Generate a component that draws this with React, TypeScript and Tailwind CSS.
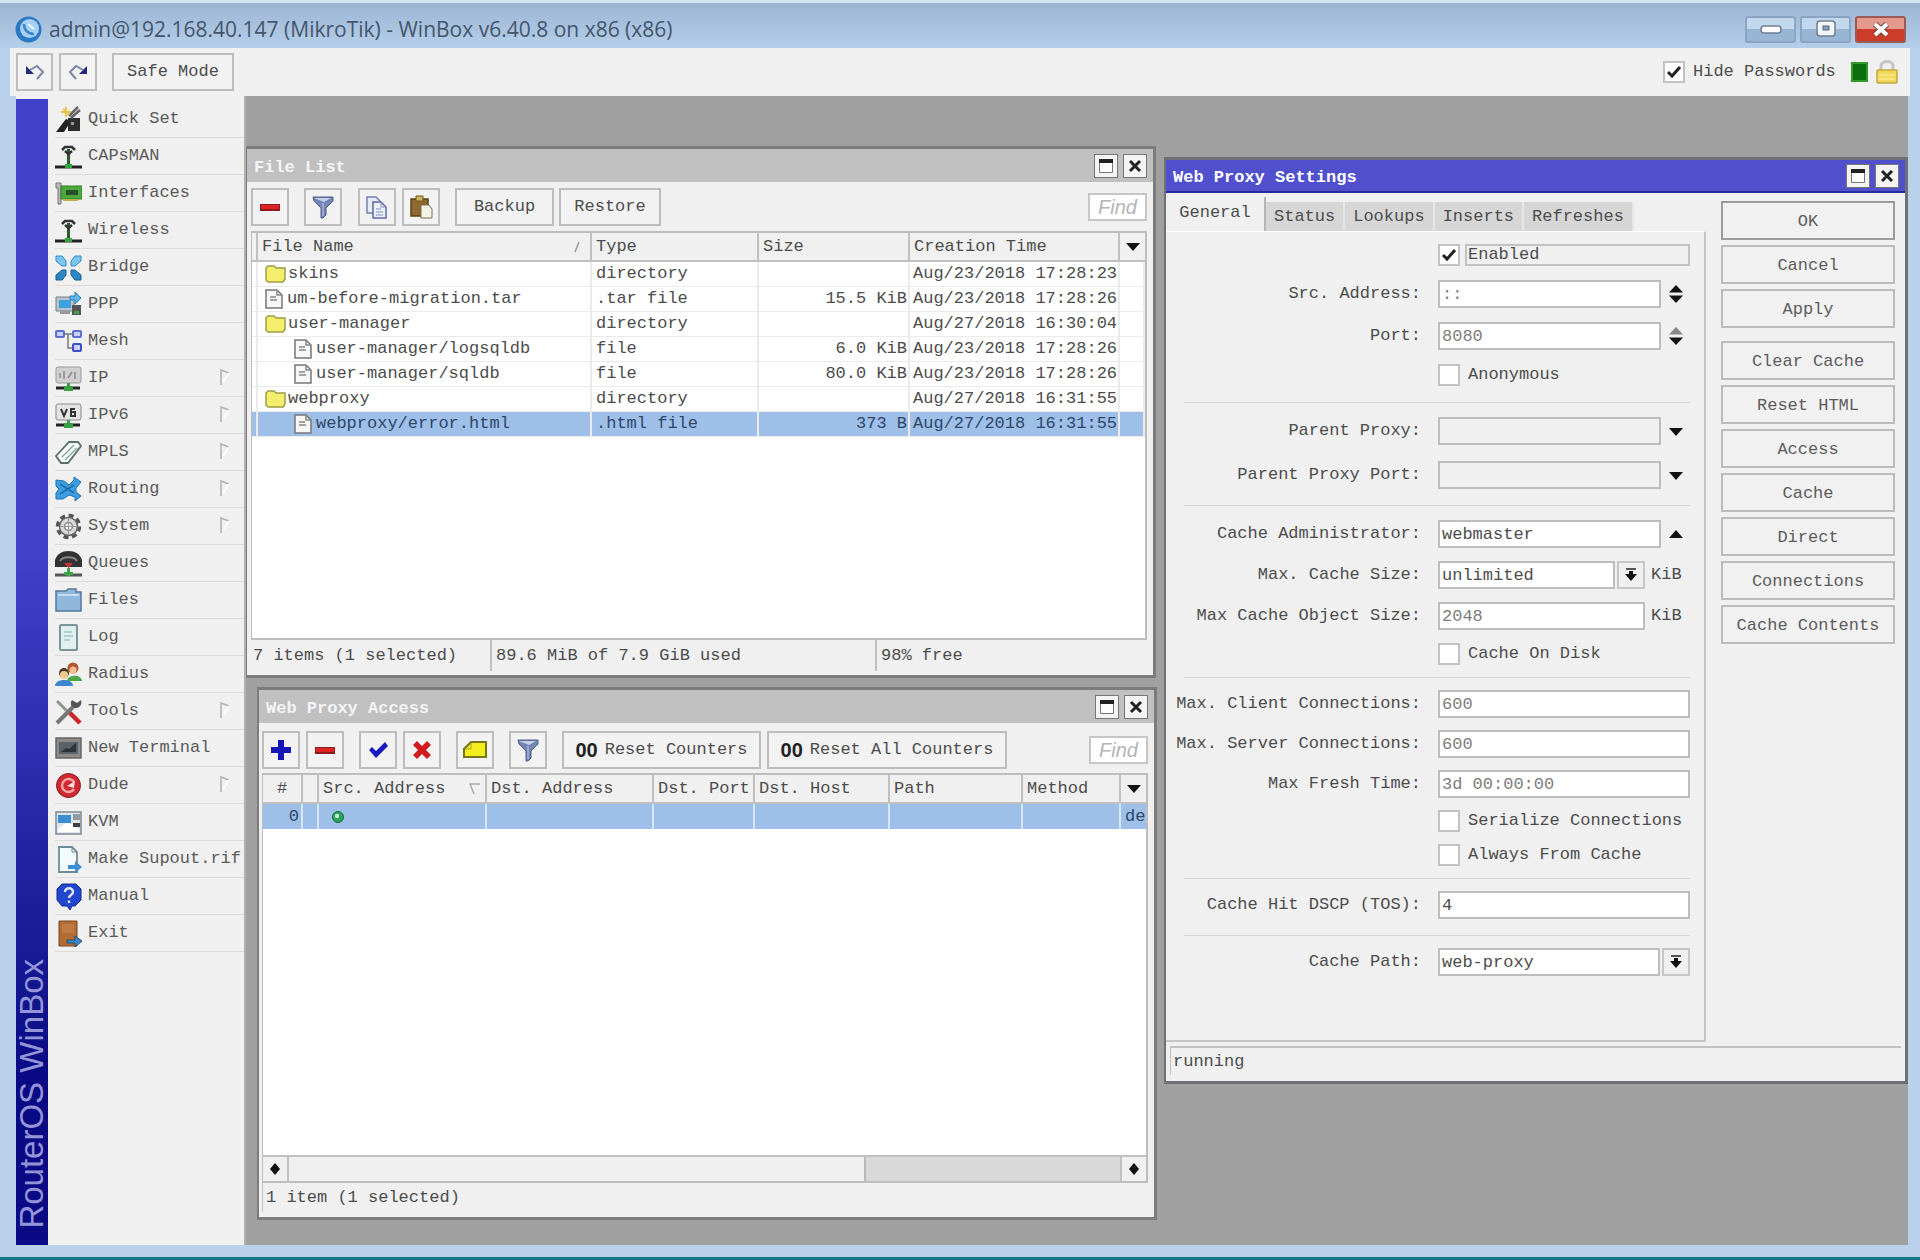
import React, { useId } from "react";

const TEXT = "text-[17px] leading-5 text-[#4c4c4c]";

/* ---------- sidebar icons, all on a 27x27 grid ---------- */

const Antenna = () => (
    <>
        <path d="M0 24h27" stroke="#222" strokeWidth="3" />
        <path d="M13.500 6v17" stroke="#2c5a2c" strokeWidth="3" />
        <path d="M7 7l3-3h7l3 3M10 8l3.500 3 3.500-3" stroke="#333" strokeWidth="2.500" fill="none" />
        <path d="M10 21h7v4h-7z" fill="#35a33f" />
    </>
);

const icons: Record<string, React.ReactNode> = {
    quickset: (
        <>
            <path d="M1 26l10-13 5 2-7 11z" fill="#222" />
            <path d="M13 12h12v13H13z" fill="#2c2c2c" />
            <path d="M14 10l9-9M16 12l9-8" stroke="#666" strokeWidth="2.500" />
            <path d="M11 1v10M6 6h10M8 3l6 6" stroke="#e2c54a" strokeWidth="1.800" />
            <path d="M16 16h3v3h-3z" fill="#999" />
        </>
    ),
    antenna: <Antenna />,
    interfaces: (
        <>
            <path d="M1 3h5v21H3V8H1z" fill="#b8b8b8" stroke="#777" />
            <path d="M6 6h21v13H6z" fill="#4ea83a" stroke="#2f7a26" />
            <path d="M11 10h12v5H11z" fill="#28502a" />
            <path d="M8 19h15v2H8z" fill="#b9b04a" />
        </>
    ),
    bridge: (
        <>
            <path d="M1 2h6l4 5v5H7L1 7z" fill="#7cc4ee" stroke="#2f8fc9" />
            <path d="M26 2h-6l-4 5v5h4l6-5z" fill="#7cc4ee" stroke="#2f8fc9" />
            <path d="M1 26h6l4-5v-5H7l-6 5z" fill="#2e86c4" stroke="#155f97" />
            <path d="M26 26h-6l-4-5v-5h4l6 5z" fill="#2e86c4" stroke="#155f97" />
        </>
    ),
    ppp: (
        <>
            <path d="M1 6h18v14H1z" fill="#b9c3ca" stroke="#75828b" />
            <path d="M4 9h12v8H4z" fill="#3fa0e0" />
            <path d="M15 5h5V1l6 6-6 6V9h-5z" fill="#5db5ea" stroke="#2a80ba" />
            <path d="M5 20h10v3H5z" fill="#999" />
            <path d="M17 14h9v10h-9z" fill="#555" />
            <path d="M19 20h5v3h-5z" fill="#3fa14a" />
        </>
    ),
    mesh: (
        <>
            <path d="M9 6h9M13 6v14h6" stroke="#777" strokeWidth="1.500" fill="none" />
            <rect x="1" y="3" width="8" height="6" rx="1" fill="#c8d0fa" stroke="#5c6fd0" strokeWidth="2" />
            <rect x="18" y="3" width="8" height="6" rx="1" fill="#c8d0fa" stroke="#5c6fd0" strokeWidth="2" />
            <rect x="18" y="16" width="8" height="7" rx="1" fill="#c8d0fa" stroke="#3e4fc0" strokeWidth="2" />
        </>
    ),
    ip: (
        <>
            <rect x="1" y="2" width="25" height="16" rx="2" fill="#d0d0d0" stroke="#999" />
            <path d="M5 13V8m4 6V6m4 7l4-6m3 0v7" stroke="#888" strokeWidth="1.500" />
            <path d="M1 23h24" stroke="#222" strokeWidth="3" />
            <path d="M12 18h3v3h3v5H9v-5h3z" fill="#38a043" />
        </>
    ),
    ipv6: (
        <>
            <rect x="1" y="2" width="25" height="16" rx="2" fill="#e4e4e4" stroke="#888" />
            <path d="M6 7l3 7 3-7M20 7h-4v7h4v-4h-4" stroke="#333" strokeWidth="2" fill="none" />
            <path d="M1 23h24" stroke="#222" strokeWidth="3" />
            <path d="M12 18h3v3h3v5H9v-5h3z" fill="#38a043" />
        </>
    ),
    mpls: (
        <>
            <path d="M1 17L14 3h9l3 4-13 17H6z" fill="#f6fbf8" stroke="#57706a" strokeWidth="1.800" />
            <path d="M7 18L19 6M10 21L22 9" stroke="#7da395" strokeWidth="1.200" />
        </>
    ),
    routing: (
        <>
            <path d="M1 4l8 1 5 4 5-5V1l7 5-5 6v4l5 4-6 5v-4l-6-2-6 4H1v-6l3-4-3-3z" fill="#3d9de0" stroke="#1f73b0" />
            <path d="M5 8l14 9M5 18l14-9" stroke="#1d6cab" strokeWidth="1.500" />
        </>
    ),
    system: (
        <>
            <circle cx="13.500" cy="13.500" r="11" fill="none" stroke="#555" strokeWidth="3.500" strokeDasharray="5 3.600" />
            <circle cx="13.500" cy="13.500" r="9" fill="#d9d9d9" stroke="#666" strokeWidth="1.500" />
            <circle cx="13.500" cy="13.500" r="4" fill="#f4f4f4" stroke="#888" strokeWidth="1.500" />
            <path d="M13.500 5v17M5 13.500h17" stroke="#999" />
        </>
    ),
    queues: (
        <>
            <path d="M0 17V10C2 4 7 1 13.500 1S25 4 27 10v7z" fill="#333" />
            <path d="M5 11c3-5 14-5 17 0" stroke="#888" strokeWidth="2" fill="none" />
            <path d="M9 13h9l-4.500 5z" fill="#c33" />
            <path d="M0 25h27" stroke="#555" strokeWidth="3" />
            <path d="M12 18h3v8h-3z" fill="#3da548" />
            <path d="M9 22h9v3H9z" fill="#3da548" />
        </>
    ),
    files: (
        <>
            <path d="M1 4h10l2-2h8v3h5v19H1z" fill="#8fb8da" stroke="#54789a" strokeWidth="1.500" />
            <path d="M3 8h21" stroke="#c3dcf0" strokeWidth="2" />
        </>
    ),
    log: (
        <>
            <rect x="5" y="1" width="17" height="25" rx="1" fill="#dff0ee" stroke="#7a9598" strokeWidth="2" />
            <path d="M9 8h8M9 12h9M9 16h6" stroke="#a5c6c8" strokeWidth="1.500" />
        </>
    ),
    radius: (
        <>
            <circle cx="18" cy="7" r="5.500" fill="#b4562d" />
            <circle cx="18" cy="9" r="3.500" fill="#efc08d" />
            <path d="M12 20c0-6 14-8 15 0z" fill="#4ea64a" />
            <circle cx="9" cy="12" r="5" fill="#4b3a25" />
            <circle cx="9" cy="14" r="4" fill="#efc98f" />
            <path d="M0 25c0-8 18-8 18 0z" fill="#3f86d2" />
        </>
    ),
    tools: (
        <>
            <path d="M2 3l11 11" stroke="#8a9a86" strokeWidth="3" />
            <path d="M13 13l12 12" stroke="#c9252b" strokeWidth="4.500" />
            <path d="M2 25L18 9" stroke="#777" strokeWidth="4" />
            <path d="M17 2c-3 4 0 9 5 8 4-1 5-5 4-8l-4 3z" fill="#555" />
        </>
    ),
    terminal: (
        <>
            <path d="M1 3h25v20H1z" fill="#8a8a8a" stroke="#666" strokeWidth="1.500" />
            <path d="M4 7h19v12H4z" fill="#5a6268" />
            <path d="M6 17l5-4 3 1 7-6v9z" fill="#2c3339" />
        </>
    ),
    dude: (
        <>
            <circle cx="13.500" cy="13.500" r="12" fill="#cf2a31" stroke="#8d1a1f" />
            <path d="M19 10a6.500 6.500 0 1 0 0 7" fill="none" stroke="#f2a6a8" strokeWidth="2.500" />
            <path d="M12 14l8-5-1 7z" fill="#f8dcdc" />
        </>
    ),
    kvm: (
        <>
            <path d="M1 3h25v22H1z" fill="#dfe5ea" stroke="#7c8894" strokeWidth="1.500" />
            <path d="M3 6h13v8H3z" fill="#3c8ed2" />
            <path d="M18 5h7v6h-7z" fill="#909aa2" />
            <path d="M3 20l8-6 10 2 4 7H3z" fill="#fff" />
            <path d="M18 14h7v4h-7z" fill="#3a4148" />
        </>
    ),
    supout: (
        <>
            <path d="M4 1h13l5 5v20H4z" fill="#f3fbfd" stroke="#6c8c98" strokeWidth="1.800" />
            <path d="M17 1v5h5" fill="none" stroke="#6c8c98" />
            <path d="M13 19h7v-4l7 6-7 6v-4h-7z" fill="#3c8fd6" />
        </>
    ),
    manual: (
        <>
            <path d="M7 1h14l5 5v11l-6 6h-3l-2 4-3-4H7l-5-6V6z" fill="#2147cf" stroke="#12298f" />
            <path d="M10 9c0-5 8-5 8 0 0 3-4 3-4 6M14 17.500v2.500" stroke="#dfe8ff" strokeWidth="2.500" fill="none" />
        </>
    ),
    exit: (
        <>
            <path d="M4 1h18v25H4z" fill="#b26a33" stroke="#7b4520" />
            <path d="M7 4h12v9H7z" fill="#be7a42" />
            <path d="M12 20h8v-4l7 5-7 6v-4h-8z" fill="#3c87c9" stroke="#24516f" />
        </>
    ),
};

const menu = [
    { label: "Quick Set", icon: "quickset" },
    { label: "CAPsMAN", icon: "antenna" },
    { label: "Interfaces", icon: "interfaces" },
    { label: "Wireless", icon: "antenna" },
    { label: "Bridge", icon: "bridge" },
    { label: "PPP", icon: "ppp" },
    { label: "Mesh", icon: "mesh" },
    { label: "IP", icon: "ip", sub: true },
    { label: "IPv6", icon: "ipv6", sub: true },
    { label: "MPLS", icon: "mpls", sub: true },
    { label: "Routing", icon: "routing", sub: true },
    { label: "System", icon: "system", sub: true },
    { label: "Queues", icon: "queues" },
    { label: "Files", icon: "files" },
    { label: "Log", icon: "log" },
    { label: "Radius", icon: "radius" },
    { label: "Tools", icon: "tools", sub: true },
    { label: "New Terminal", icon: "terminal" },
    { label: "Dude", icon: "dude", sub: true },
    { label: "KVM", icon: "kvm" },
    { label: "Make Supout.rif", icon: "supout" },
    { label: "Manual", icon: "manual" },
    { label: "Exit", icon: "exit" },
];

const files = [
    { name: "skins", type: "directory", size: "", time: "Aug/23/2018 17:28:23", dir: true },
    { name: "um-before-migration.tar", type: ".tar file", size: "15.5 KiB", time: "Aug/23/2018 17:28:26" },
    { name: "user-manager", type: "directory", size: "", time: "Aug/27/2018 16:30:04", dir: true },
    { name: "user-manager/logsqldb", type: "file", size: "6.0 KiB", time: "Aug/23/2018 17:28:26", child: true },
    { name: "user-manager/sqldb", type: "file", size: "80.0 KiB", time: "Aug/23/2018 17:28:26", child: true },
    { name: "webproxy", type: "directory", size: "", time: "Aug/27/2018 16:31:55", dir: true },
    { name: "webproxy/error.html", type: ".html file", size: "373 B", time: "Aug/27/2018 16:31:55", child: true, selected: true },
];

/* ---------- small toolbar drawings ---------- */

const Minus = () => (
    <svg width="22" height="22" viewBox="0 0 22 22">
        <path d="M1 8h20v7H1z" fill="#8f1c1c" />
        <path d="M2 9h18v4H2z" fill="#dc2222" />
    </svg>
);

const Plus = () => (
    <svg width="22" height="22" viewBox="0 0 22 22">
        <path d="M8 1h6v7h7v6h-7v7H8v-7H1V8h7z" fill="#1515b8" />
    </svg>
);

const Tick = () => (
    <svg width="22" height="22" viewBox="0 0 22 22">
        <path d="M2 11l3-3 4 4 9-9 3 4L9 19z" fill="#1a1abf" />
    </svg>
);

const Cross = () => (
    <svg width="22" height="22" viewBox="0 0 22 22">
        <path d="M2 6l4-4 5 5 5-5 4 4-5 5 5 5-4 4-5-5-5 5-4-4 5-5z" fill="#d01c1c" />
    </svg>
);

const Note = () => (
    <svg width="26" height="22" viewBox="0 0 26 22">
        <path d="M2 18V10l7-7h15v15z" fill="#f2ee1c" stroke="#77741c" strokeWidth="2" />
        <path d="M3 10h6V4" fill="none" stroke="#a8a43a" />
    </svg>
);

const Funnel = () => (
    <svg width="24" height="24" viewBox="0 0 24 24">
        <path d="M2 2h20v4l-7 7v7l-3 3h-2V13L3 6z" fill="#7385b4" stroke="#4e5c88" />
        <path d="M3 3h17l-7 4z" fill="#c7cfe4" />
        <path d="M12 8v13" stroke="#aab5d3" strokeWidth="1.500" />
    </svg>
);

const Copy = () => (
    <svg width="26" height="26" viewBox="0 0 26 26">
        <path d="M3 3h9l4 4v12H3z" fill="#e8ebf7" stroke="#7683b0" strokeWidth="1.500" />
        <path d="M9 8h8l5 5v11H9z" fill="#eef0fb" stroke="#5b69a5" strokeWidth="1.500" />
        <path d="M17 8v5h5M12 15h5M12 18h7M12 21h7" fill="none" stroke="#8290c4" />
    </svg>
);

const Paste = () => (
    <svg width="26" height="26" viewBox="0 0 26 26">
        <path d="M3 5h17v17H3z" fill="#8c6a30" stroke="#5b4219" strokeWidth="1.500" />
        <path d="M8 2h7v5H8z" fill="#cbb35f" stroke="#6e5620" />
        <path d="M13 11h8l3 4v9H13z" fill="#f5f2e6" stroke="#7a7050" />
    </svg>
);

const Down = () => (
    <svg width="16" height="9" viewBox="0 0 16 9">
        <path d="M1 1h14L8 9z" fill="#111" />
    </svg>
);

const Spinner = ({ dim }: { dim?: boolean }) => (
    <svg width="16" height="20" viewBox="0 0 16 20">
        <path d="M1 8.500L8 1l7 7.500z" fill={dim ? "#888" : "#111"} />
        <path d="M1 11.500h14L8 19z" fill="#111" />
    </svg>
);

const Diamond = () => (
    <svg width="12" height="12" viewBox="0 0 12 12">
        <path d="M6 0l5 6-5 6-5-6z" fill="#111" />
    </svg>
);

const DropIcon = () => (
    <svg width="14" height="16" viewBox="0 0 14 16">
        <path d="M2 1h10v2H2z" fill="#555" />
        <path d="M5 4h4v3h4l-6 7-6-7h4z" fill="#111" />
    </svg>
);

const Folder = () => (
    <svg width="22" height="18" viewBox="0 0 22 18">
        <path d="M1 3l2-2h6l2 2h9v11l-2 3H3l-2-2z" fill="#f3ef6c" stroke="#a09b45" strokeWidth="1.500" />
    </svg>
);

const Doc = () => (
    <svg width="18" height="20" viewBox="0 0 18 20">
        <path d="M1 1h11l5 5v13H1z" fill="#f7f7f7" stroke="#777" strokeWidth="1.500" />
        <path d="M12 1v5h5M5 8h6M5 11h7" fill="none" stroke="#888" strokeWidth="1.500" />
    </svg>
);

/* ---------- shared controls ---------- */

function ToolButton({ label, className = "", children }: { label?: string; className?: string; children: React.ReactNode }) {
    return (
        <button
            aria-label={label}
            className={`flex h-[38px] items-center justify-center border-2 border-[#bdbdbd] bg-[#f2f2f2] ${className}`}
        >
            {children}
        </button>
    );
}

function Checkbox({ label, checked, boxed }: { label: string; checked?: boolean; boxed?: boolean }) {
    return (
        <label className="flex h-[22px] w-full items-center gap-[5px]">
            <span className="relative h-[22px] w-[22px] shrink-0">
                <input
                    type="checkbox"
                    defaultChecked={checked}
                    className="peer block h-[22px] w-[22px] appearance-none border-2 border-[#c2c2c2] bg-white"
                />
                <svg
                    className="pointer-events-none absolute left-1 top-1 hidden peer-checked:block"
                    width="14"
                    height="14"
                    viewBox="0 0 14 14"
                >
                    <path d="M1 7l4 4 8-9" fill="none" stroke="#222" strokeWidth="3" />
                </svg>
            </span>
            <span className={`flex h-[22px] flex-1 items-center whitespace-nowrap border-2 px-px ${boxed ? "border-[#c2c2c2]" : "border-transparent"}`}>
                {label}
            </span>
        </label>
    );
}

function TitleBar({ title, active }: { title: string; active?: boolean }) {
    return (
        <div
            className={`flex h-[33px] shrink-0 items-center justify-between pl-[7px] pr-[6px] font-bold ${
                active ? "border-b-2 border-[#2a2aa0] bg-[#5050cc] text-white" : "bg-[#c0c0c0] text-[#f4f4f4]"
            }`}
        >
            <h2 className="pt-1">{title}</h2>
            <div className="flex gap-[5px]">
                <button aria-label="Maximize" className="flex h-6 w-6 items-center justify-center border border-[#777] bg-[#f4f4f4]">
                    <svg width="16" height="16" viewBox="0 0 16 16">
                        <path d="M1.500 1.500h13v13h-13z" fill="#fff" stroke="#777" />
                        <path d="M1 1h14v4H1z" fill="#222" />
                    </svg>
                </button>
                <button aria-label="Close" className="flex h-6 w-6 items-center justify-center border border-[#777] bg-[#f4f4f4]">
                    <svg width="14" height="14" viewBox="0 0 14 14">
                        <path d="M2 2l10 10M12 2L2 12" stroke="#222" strokeWidth="3" />
                    </svg>
                </button>
            </div>
        </div>
    );
}

function Find() {
    return (
        <input
            aria-label="Find"
            placeholder="Find"
            className="ml-auto h-7 w-[59px] border-2 border-[#c6c6c6] bg-white text-center font-['Liberation_Sans',sans-serif] text-[20px] italic placeholder:text-[#b4b4b4]"
        />
    );
}

const TH = "h-[29px] border-r-2 border-b-2 border-[#c0c0c0] bg-[#f0f0f0] font-normal whitespace-nowrap overflow-hidden";
const TH_LEFT = `${TH} px-1 text-left`;

function FileList() {
    return (
        <section className="absolute left-0 top-[50px] flex h-[532px] w-[910px] flex-col border-[3px] border-l border-[#7c7c7c] bg-[#f0f0f0]">
            <TitleBar title="File List" />
            <div className="flex items-center pb-[5px] pl-1 pr-[6px] pt-[6px]">
                <ToolButton label="Remove" className="mr-[15px] w-[38px]"><Minus /></ToolButton>
                <ToolButton label="Filter" className="mr-4 w-[38px]"><Funnel /></ToolButton>
                <ToolButton label="Copy" className="mr-[6px] w-[38px]"><Copy /></ToolButton>
                <ToolButton label="Paste" className="mr-[15px] w-[38px]"><Paste /></ToolButton>
                <ToolButton className="mr-[5px] w-[99px]">Backup</ToolButton>
                <ToolButton className="w-[102px]">Restore</ToolButton>
                <Find />
            </div>
            <div className="ml-1 mr-[6px] flex-1 border-2 border-l border-[#bdbdbd] bg-white">
                <table className="w-full table-fixed border-separate border-spacing-0">
                    <colgroup>
                        <col className="w-[6px]" />
                        <col />
                        <col className="w-[167px]" />
                        <col className="w-[151px]" />
                        <col className="w-[210px]" />
                        <col className="w-[25px]" />
                    </colgroup>
                    <thead>
                        <tr>
                            <th className={TH}></th>
                            <th className={TH_LEFT}>
                                <div className="flex items-center justify-between pr-[6px]">
                                    File Name
                                    <svg width="6" height="12" viewBox="0 0 6 12">
                                        <path d="M1 11L5 1" stroke="#999" strokeWidth="1.500" />
                                    </svg>
                                </div>
                            </th>
                            <th className={TH_LEFT}>Type</th>
                            <th className={TH_LEFT}>Size</th>
                            <th className={TH_LEFT}>Creation Time</th>
                            <th className="h-[29px] border-b-2 border-[#c0c0c0] bg-[#f0f0f0]">
                                <button aria-label="Columns" className="flex w-full justify-center"><Down /></button>
                            </th>
                        </tr>
                    </thead>
                    <tbody>
                        {files.map((f) => {
                            const td = `h-[25px] border-r-2 border-b border-[#ebebeb] overflow-hidden whitespace-nowrap ${f.selected ? "bg-[#9dbfe8] text-[#2f4668]" : ""}`;
                            return (
                                <tr key={f.name}>
                                    <td className={td}></td>
                                    <td className={td}>
                                        <span className={`flex items-center ${f.dir ? "gap-px" : "gap-1"} ${f.child ? "pl-9" : "pl-[7px]"}`}>
                                            {f.dir ? <Folder /> : <Doc />}
                                            {f.name}
                                        </span>
                                    </td>
                                    <td className={`${td} px-1`}>{f.type}</td>
                                    <td className={`${td} pr-px text-right`}>{f.size}</td>
                                    <td className={`${td} pl-[3px]`}>{f.time}</td>
                                    <td className={td}></td>
                                </tr>
                            );
                        })}
                    </tbody>
                </table>
            </div>
            <footer className="mb-1 ml-1 mr-[6px] flex h-[31px] items-center">
                <span className="flex h-full w-[241px] items-center border-r-2 border-[#c0c0c0] pl-[2px]">7 items (1 selected)</span>
                <span className="flex h-full w-[385px] items-center border-r-2 border-[#c0c0c0] pl-1">89.6 MiB of 7.9 GiB used</span>
                <span className="pl-1">98% free</span>
            </footer>
        </section>
    );
}

const Zeros = () => <b className="mr-[7px] font-['Liberation_Sans',sans-serif] text-[20px] text-[#222]">00</b>;

function ProxyAccess() {
    const td = "h-[25px] border-r-2 border-[#d8e6f6] bg-[#9dbfe8] text-[#2f4668] whitespace-nowrap overflow-hidden";
    return (
        <section className="absolute left-[11px] top-[591px] flex h-[533px] w-[900px] flex-col border-[3px] border-l-2 border-[#7c7c7c] bg-[#f0f0f0]">
            <TitleBar title="Web Proxy Access" />
            <div className="flex items-center pb-1 pl-[3px] pr-[6px] pt-2">
                <ToolButton label="Add" className="mr-[6px] w-[38px]"><Plus /></ToolButton>
                <ToolButton label="Remove" className="mr-[15px] w-[38px]"><Minus /></ToolButton>
                <ToolButton label="Enable" className="mr-[6px] w-[38px]"><Tick /></ToolButton>
                <ToolButton label="Disable" className="mr-[15px] w-[38px]"><Cross /></ToolButton>
                <ToolButton label="Comment" className="mr-[15px] w-[38px]"><Note /></ToolButton>
                <ToolButton label="Filter" className="mr-[15px] w-[38px]"><Funnel /></ToolButton>
                <ToolButton className="mr-[6px] w-[199px]"><Zeros />Reset Counters</ToolButton>
                <ToolButton className="w-[240px]"><Zeros />Reset All Counters</ToolButton>
                <Find />
            </div>
            <div className="ml-[3px] mr-[6px] flex flex-1 flex-col border-2 border-l border-[#bdbdbd] bg-white">
                <table className="w-full table-fixed border-separate border-spacing-0">
                    <colgroup>
                        <col className="w-10" />
                        <col className="w-4" />
                        <col className="w-[168px]" />
                        <col />
                        <col className="w-[101px]" />
                        <col className="w-[135px]" />
                        <col className="w-[133px]" />
                        <col className="w-[98px]" />
                        <col className="w-[25px]" />
                    </colgroup>
                    <thead>
                        <tr>
                            <th className={TH}>#</th>
                            <th className={TH}></th>
                            <th className={TH_LEFT}>
                                <div className="flex items-center justify-between">
                                    Src. Address
                                    <svg width="12" height="12" viewBox="0 0 12 12">
                                        <path d="M11 1H1l4 10" fill="none" stroke="#aaa" strokeWidth="1.500" />
                                    </svg>
                                </div>
                            </th>
                            <th className={TH_LEFT}>Dst. Address</th>
                            <th className={TH_LEFT}>Dst. Port</th>
                            <th className={TH_LEFT}>Dst. Host</th>
                            <th className={TH_LEFT}>Path</th>
                            <th className={TH_LEFT}>Method</th>
                            <th className="h-[29px] border-b-2 border-[#c0c0c0] bg-[#f0f0f0]">
                                <button aria-label="Columns" className="flex w-full justify-center"><Down /></button>
                            </th>
                        </tr>
                    </thead>
                    <tbody>
                        <tr>
                            <td className={`${td} pr-[2px] text-right`}>0</td>
                            <td className={td}></td>
                            <td className={`${td} pl-3`}>
                                <svg width="14" height="14" viewBox="0 0 14 14">
                                    <circle cx="7" cy="7" r="5.500" fill="#2ba35c" stroke="#176a39" />
                                    <circle cx="6" cy="6" r="2.200" fill="#c3f0d2" />
                                </svg>
                            </td>
                            <td className={td}></td>
                            <td className={td}></td>
                            <td className={td}></td>
                            <td className={td}></td>
                            <td className={td}></td>
                            <td className="bg-[#9dbfe8] pl-1 text-[#2f4668]">de</td>
                        </tr>
                    </tbody>
                </table>
                <div className="mt-auto flex h-[26px] border-t-2 border-[#c0c0c0] bg-[#f0f0f0]">
                    <button aria-label="Scroll left" className="flex w-[26px] items-center justify-center border-r-2 border-[#c0c0c0]"><Diamond /></button>
                    <div className="flex-1 border-r-2 border-[#b8b8b8]"></div>
                    <div className="w-[254px] bg-[#d9d9d9]"></div>
                    <button aria-label="Scroll right" className="flex w-[26px] items-center justify-center border-l-2 border-[#c0c0c0]"><Diamond /></button>
                </div>
            </div>
            <footer className="mb-[5px] ml-[3px] flex h-[29px] items-center border-l border-[#c0c0c0] pl-[3px]">1 item (1 selected)</footer>
        </section>
    );
}

type FieldProps = {
    label: string;
    value?: string;
    dim?: boolean;
    disabled?: boolean;
    children?: React.ReactNode;
};

function Field({ label, value = "", dim, disabled, children }: FieldProps) {
    const id = useId();
    return (
        <div className="flex h-7 items-center">
            <label htmlFor={id} className="w-[264px] shrink-0 whitespace-nowrap pr-[17px] text-right">{label}</label>
            <input
                id={id}
                defaultValue={value}
                className={`h-7 min-w-0 flex-1 border-2 border-[#bdbdbd] px-[2px] ${disabled ? "bg-[#f0f0f0]" : "bg-white"} ${dim ? "text-[#7d7d7d]" : ""}`}
            />
            {children}
        </div>
    );
}

function SideButton({ label, children }: { label: string; children: React.ReactNode }) {
    return <button type="button" aria-label={label} className="flex h-7 w-[29px] items-center justify-center">{children}</button>;
}

function Group({ className, last, children }: { className: string; last?: boolean; children: React.ReactNode }) {
    return (
        <>
            <div className={`flex flex-col ${className}`}>{children}</div>
            {!last && <hr className="ml-[10px] border-t border-[#d6d6d6]" />}
        </>
    );
}

function ProxySettings() {
    const actions = ["OK", "Cancel", "Apply", "Clear Cache", "Reset HTML", "Access", "Cache", "Direct", "Connections", "Cache Contents"];
    return (
        <section className="absolute right-0 top-[61px] flex h-[927px] w-[744px] flex-col border-[3px] border-l-2 border-[#6f6f78] bg-[#f0f0f0]">
            <TitleBar title="Web Proxy Settings" active />
            <div className="flex flex-1">
                <div className="flex w-[540px] flex-col">
                    <div role="tablist" className="flex h-[38px] items-end pt-1">
                        <button role="tab" aria-selected="true" className="h-full w-[100px] border-r-2 border-[#b5b5b5] pb-[2px] text-center">General</button>
                        {["Status", "Lookups", "Inserts", "Refreshes"].map((t) => (
                            <button key={t} role="tab" aria-selected="false" className="h-[29px] border-r-2 border-[#e6e6e6] bg-[#d6d6d6] px-2">
                                {t}
                            </button>
                        ))}
                    </div>
                    <form className="flex-1 border-r-2 border-b-2 border-t border-[#c4c4c4] border-t-white pl-2 pr-[14px]">
                        <Group className="gap-[14px] pt-3 pb-4">
                            <div className="pl-[264px]"><Checkbox label="Enabled" checked boxed /></div>
                            <Field label="Src. Address:" value="::" dim>
                                <SideButton label="Step source address"><Spinner /></SideButton>
                            </Field>
                            <Field label="Port:" value="8080" dim>
                                <SideButton label="Step port"><Spinner dim /></SideButton>
                            </Field>
                            <div className="pl-[264px]"><Checkbox label="Anonymous" /></div>
                        </Group>
                        <Group className="gap-4 pt-[14px] pb-4">
                            <Field label="Parent Proxy:" disabled>
                                <SideButton label="Expand parent proxy"><Down /></SideButton>
                            </Field>
                            <Field label="Parent Proxy Port:" disabled>
                                <SideButton label="Expand parent proxy port"><Down /></SideButton>
                            </Field>
                        </Group>
                        <Group className="gap-[13px] pt-[14px] pb-3">
                            <Field label="Cache Administrator:" value="webmaster">
                                <SideButton label="Collapse cache administrator">
                                    <svg width="16" height="9" viewBox="0 0 16 9">
                                        <path d="M1 8h14L8 0z" fill="#111" />
                                    </svg>
                                </SideButton>
                            </Field>
                            <Field label="Max. Cache Size:" value="unlimited">
                                <button type="button" aria-label="Choose cache size" className="ml-[2px] flex h-7 w-7 items-center justify-center border-2 border-[#c6c6c6]"><DropIcon /></button>
                                <span className="w-[45px] pl-[6px]">KiB</span>
                            </Field>
                            <Field label="Max Cache Object Size:" value="2048" dim>
                                <span className="w-[45px] pl-[6px]">KiB</span>
                            </Field>
                            <div className="pl-[264px]"><Checkbox label="Cache On Disk" /></div>
                        </Group>
                        <Group className="gap-3 py-3">
                            <Field label="Max. Client Connections:" value="600" dim />
                            <Field label="Max. Server Connections:" value="600" dim />
                            <Field label="Max Fresh Time:" value="3d 00:00:00" dim />
                            <div className="pl-[264px]"><Checkbox label="Serialize Connections" /></div>
                            <div className="pl-[264px]"><Checkbox label="Always From Cache" /></div>
                        </Group>
                        <Group className="pt-3 pb-4">
                            <Field label="Cache Hit DSCP (TOS):" value="4" />
                        </Group>
                        <Group className="pt-3" last>
                            <Field label="Cache Path:" value="web-proxy">
                                <button type="button" aria-label="Choose cache path" className="ml-[2px] flex h-7 w-7 items-center justify-center border-2 border-[#c6c6c6]"><DropIcon /></button>
                            </Field>
                        </Group>
                    </form>
                </div>
                <div className="flex flex-1 flex-col gap-[5px] pl-[15px] pr-[10px] pt-2">
                    {actions.map((a) => (
                        <button
                            key={a}
                            className={`h-[39px] border-2 bg-[#f1f1f1] pt-[2px] text-[#5c5c5c] ${a === "OK" ? "border-[#9c9c9c]" : "border-[#bcbcbc]"} ${a === "Clear Cache" ? "mt-2" : ""}`}
                        >
                            {a}
                        </button>
                    ))}
                </div>
            </div>
            <footer className="mx-1 mb-[6px] mt-1 h-[29px] border-l border-t-2 border-[#c0c0c0] pl-[2px] pt-1">running</footer>
        </section>
    );
}

function Sidebar() {
    return (
        <aside className="flex shrink-0 bg-[#f0f0f0]">
            <div className="mt-[3px] flex w-8 items-center justify-end bg-linear-to-b from-[#4040c8] from-40% to-[#0a0a84] to-85% [writing-mode:vertical-rl]">
                <span className="mb-4 rotate-180 font-['Liberation_Sans',sans-serif] text-[33px] leading-8 text-[#9494d8]">RouterOS WinBox</span>
            </div>
            <nav className="w-[198px] border-r-2 border-[#b0b0b0] pl-[7px] pt-[5px]">
                {menu.map((m) => (
                    <a
                        key={m.label}
                        href="#"
                        className="flex h-[37px] items-center gap-[6px] whitespace-nowrap border-b border-[#dcdcdc] text-[#5a5a5a]"
                    >
                        <svg className="shrink-0" width="27" height="27" viewBox="0 0 27 27">{icons[m.icon]}</svg>
                        {m.label}
                        {m.sub && (
                            <svg className="ml-auto mr-[13px]" width="12" height="18" viewBox="0 0 12 18">
                                <path d="M2 16V1l8 3" fill="none" stroke="#b0b0b0" strokeWidth="1.500" />
                                <path d="M10 4L4 13" stroke="#fff" strokeWidth="1.500" />
                            </svg>
                        )}
                    </a>
                ))}
            </nav>
        </aside>
    );
}

const CAPTION = "flex h-[27px] w-[51px] items-center justify-center rounded-[3px] border-2";

export default function App() {
    return (
        <div className={`flex min-h-screen flex-col border-b-[3px] border-[#14788c] bg-[#b9d1ea] font-['Liberation_Mono',monospace] ${TEXT}`}>
            <header className="flex h-12 items-center border-t-[3px] border-[#d3e6f5] bg-linear-to-b from-[#9ab4d2] to-[#b5cfea] pl-[15px] pr-[14px] pt-[7px]">
                <svg width="27" height="27" viewBox="0 0 27 27">
                    <circle cx="13.500" cy="13.500" r="13" fill="#2c78c4" />
                    <circle cx="14.500" cy="12.500" r="9.500" fill="#a5d0f2" />
                    <path d="M9 8c0 6 4 10 10 10" fill="none" stroke="#3f86cc" strokeWidth="2.500" />
                    <path d="M13 8l6 5" stroke="#e9f5ff" strokeWidth="2" />
                </svg>
                <h1 className="ml-[7px] font-['Open_Sans',sans-serif] text-[21px] leading-7 text-[#44566c]">
                    admin@192.168.40.147 (MikroTik) - WinBox v6.40.8 on x86 (x86)
                </h1>
                <div className="ml-auto flex gap-1">
                    <button aria-label="Minimize" className={`${CAPTION} border-[#8aa4c2] bg-linear-to-b from-[#c3d8ee] from-50% to-[#98b5d4] to-50%`}>
                        <svg width="22" height="10" viewBox="0 0 22 10">
                            <rect x="1" y="2" width="20" height="7" rx="3" fill="#fff" stroke="#6f7f90" strokeWidth="1.500" />
                        </svg>
                    </button>
                    <button aria-label="Restore" className={`${CAPTION} border-[#8aa4c2] bg-linear-to-b from-[#c3d8ee] from-50% to-[#98b5d4] to-50%`}>
                        <svg width="20" height="18" viewBox="0 0 20 18">
                            <rect x="1" y="1" width="18" height="15" rx="3" fill="#f2f6fa" stroke="#6f7f90" strokeWidth="1.500" />
                            <rect x="7" y="6" width="6" height="4" fill="#8aa0b8" stroke="#55677b" />
                        </svg>
                    </button>
                    <button aria-label="Close" className={`${CAPTION} border-[#9c5a56] bg-linear-to-b from-[#e39a8c] from-50% to-[#cb3d28] to-50%`}>
                        <svg width="18" height="17" viewBox="0 0 18 17">
                            <path d="M3 3l12 11M15 3L3 14" stroke="#7a4440" strokeWidth="6" />
                            <path d="M3 3l12 11M15 3L3 14" stroke="#fff" strokeWidth="4" />
                        </svg>
                    </button>
                </div>
            </header>

            <div className="ml-[10px] mr-[10px] flex h-12 items-center bg-[#f0f0f0] pl-[6px] pr-[11px]">
                <ToolButton label="Undo" className="mr-[6px] w-[37px]">
                    <svg width="22" height="20" viewBox="0 0 22 20">
                        <path d="M2 4v8h8z" fill="#26267c" />
                        <path d="M6 8l7-4 6 6-6 7" fill="none" stroke="#7c86a4" strokeWidth="2" />
                    </svg>
                </ToolButton>
                <ToolButton label="Redo" className="mr-[15px] w-[38px]">
                    <svg width="22" height="20" viewBox="0 0 22 20">
                        <path d="M20 4v8h-8z" fill="#26267c" />
                        <path d="M16 8L9 4l-6 6 6 7" fill="none" stroke="#7c86a4" strokeWidth="2" />
                    </svg>
                </ToolButton>
                <ToolButton className="w-[122px]">Safe Mode</ToolButton>
                <div className="ml-auto flex items-center">
                    <div className="w-[175px]"><Checkbox label="Hide Passwords" checked /></div>
                    <span className="ml-[13px] h-5 w-[17px] border-2 border-[#2f9a2f] bg-[#0c6e0c]"></span>
                    <svg className="ml-[7px]" width="24" height="26" viewBox="0 0 24 26">
                        <path d="M6 13V7c0-6 12-6 12 0v6" fill="none" stroke="#c4c4c4" strokeWidth="3" />
                        <rect x="2" y="11" width="20" height="13" rx="1" fill="#f2d85c" stroke="#c2a63a" strokeWidth="1.500" />
                        <path d="M4 16h16M4 20h16" stroke="#fae98e" strokeWidth="1.500" />
                    </svg>
                </div>
            </div>

            <div className="flex flex-1 pb-3 pl-4 pr-3">
                <Sidebar />
                <main className="relative flex-1 overflow-hidden bg-[#a0a0a0]">
                    <FileList />
                    <ProxyAccess />
                    <ProxySettings />
                </main>
            </div>
        </div>
    );
}
